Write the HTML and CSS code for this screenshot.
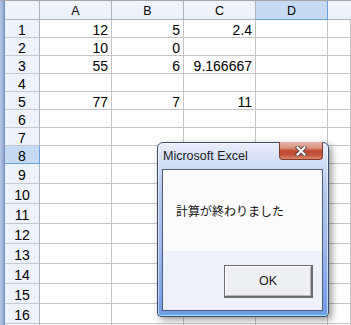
FILE: index.html
```html
<html>
<head>
	<title>Microsoft Excel</title>
	<link rel="stylesheet" href="styles.css">
</head>
<body>
<div class="window">
	<div class="frameLeft"></div>
	<div class="sheet">
		<div class="hd corner"></div><div class="hd">A</div><div class="hd">B</div><div class="hd">C</div><div class="hd sel">D</div><div class="hd last"></div>

		<div class="rh">1</div><div class="c">12</div><div class="c">5</div><div class="c">2.4</div><div class="c"></div><div class="c"></div>
		<div class="rh">2</div><div class="c">10</div><div class="c">0</div><div class="c"></div><div class="c"></div><div class="c"></div>
		<div class="rh">3</div><div class="c">55</div><div class="c">6</div><div class="c">9.166667</div><div class="c"></div><div class="c"></div>
		<div class="rh">4</div><div class="c"></div><div class="c"></div><div class="c"></div><div class="c"></div><div class="c"></div>
		<div class="rh">5</div><div class="c">77</div><div class="c">7</div><div class="c">11</div><div class="c"></div><div class="c"></div>
		<div class="rh">6</div><div class="c"></div><div class="c"></div><div class="c"></div><div class="c"></div><div class="c"></div>
		<div class="rh">7</div><div class="c"></div><div class="c"></div><div class="c"></div><div class="c"></div><div class="c"></div>
		<div class="rh sel">8</div><div class="c"></div><div class="c"></div><div class="c"></div><div class="c"></div><div class="c"></div>
		<div class="rh tall">9</div><div class="c"></div><div class="c"></div><div class="c"></div><div class="c"></div><div class="c"></div>
		<div class="rh tall">10</div><div class="c"></div><div class="c"></div><div class="c"></div><div class="c"></div><div class="c"></div>
		<div class="rh tall">11</div><div class="c"></div><div class="c"></div><div class="c"></div><div class="c"></div><div class="c"></div>
		<div class="rh tall">12</div><div class="c"></div><div class="c"></div><div class="c"></div><div class="c"></div><div class="c"></div>
		<div class="rh tall">13</div><div class="c"></div><div class="c"></div><div class="c"></div><div class="c"></div><div class="c"></div>
		<div class="rh tall">14</div><div class="c"></div><div class="c"></div><div class="c"></div><div class="c"></div><div class="c"></div>
		<div class="rh tall">15</div><div class="c"></div><div class="c"></div><div class="c"></div><div class="c"></div><div class="c"></div>
		<div class="rh tall">16</div><div class="c"></div><div class="c"></div><div class="c"></div><div class="c"></div><div class="c"></div>
		<div class="rh tall"></div><div class="c"></div><div class="c"></div><div class="c"></div><div class="c"></div><div class="c"></div>
	</div>
</div>

<div class="dialog">
	<div class="dlgTitle">
		<span class="dlgCaption">Microsoft Excel</span>
		<span class="closeBtn">
			<svg width="12" height="10" viewBox="0 0 12 10">
				<path d="M2.5 1.5 L9.5 8.5 M9.5 1.5 L2.5 8.5" stroke="#5a4a4a" stroke-width="4" stroke-linecap="square"/>
				<path d="M2.5 1.5 L9.5 8.5 M9.5 1.5 L2.5 8.5" stroke="#ffffff" stroke-width="2" stroke-linecap="square"/>
			</svg>
		</span>
	</div>
	<div class="dlgBody">
		<div class="dlgMsg">計算が終わりました</div>
		<div class="dlgActions">
			<div class="okBtn">OK</div>
		</div>
	</div>
</div>
</body>
</html>
```

FILE: styles.css
```css
body {
	margin: 0;
	width: 351px;
	height: 325px;
	overflow: hidden;
	background-color: #ffffff;
	font-family: "Liberation Sans", Arial, sans-serif;
}

.window {
	display: flex;
	border-top: 1px solid #a6a6a6;
	height: 324px;
	overflow: hidden;
}
.frameLeft {
	width: 4px;
	flex: none;
	background: linear-gradient(to right, #b9c8e6, #8da3d2);
	border-right: 1px solid #7d90b9;
}

.sheet {
	flex: 1;
	display: grid;
	grid-template-columns: 35px 72px 72px 72px 72px 1fr;
	grid-template-rows: 19px repeat(8, 18px) repeat(9, 20px);
	font-size: 14px;
	line-height: 14px;
	color: #000000;
}
.sheet > div {
	box-sizing: border-box;
	display: flex;
	align-items: flex-end;
	white-space: nowrap;
	overflow: hidden;
}

.c {
	justify-content: flex-end;
	padding-right: 3px;
	background-color: #ffffff;
	border-right: 1px solid #c4c4c4;
	border-bottom: 1px solid #c4c4c4;
}

.hd {
	justify-content: center;
	font-size: 12.5px;
	padding-bottom: 1px;
	background-color: #eef2fa;
	border-right: 1px solid #aab3c0;
	border-bottom: 1px solid #aab3c0;
}
.hd.last {
	border-right: none;
}
.rh {
	justify-content: center;
	background-color: #eef2fa;
	border-right: 1px solid #aab3c0;
	border-bottom: 1px solid #c4c8d0;
}
.rh.tall, .tall ~ .c {
	padding-bottom: 1px;
}
.hd.sel, .rh.sel {
	background-color: #c6daf4;
	border-right-color: #6a9fe0;
	border-bottom-color: #6a9fe0;
}

.dialog {
	position: absolute;
	left: 157px;
	top: 142px;
	width: 172px;
	height: 175px;
	box-sizing: border-box;
	display: flex;
	flex-direction: column;
	border: 1px solid #3c4c6c;
	border-radius: 6px 6px 4px 4px;
	background: linear-gradient(to bottom, #e9eefb 0%, #cfdcf5 12%, #b2c7ee 30%, #9db8ea 60%, #6f9be6 100%);
	box-shadow: 3px 3px 7px rgba(0, 0, 0, 0.4), inset 0 0 0 1px rgba(255, 255, 255, 0.55), inset 0 -2px 0 #58b4ec;
}

.dlgTitle {
	height: 26px;
	flex: none;
	display: flex;
	align-items: flex-start;
}
.dlgCaption {
	padding: 6px 0 0 5px;
	font-size: 12.5px;
	color: #1b1b22;
}
.closeBtn {
	margin-left: auto;
	margin-right: 5px;
	margin-top: -1px;
	width: 44px;
	height: 18px;
	box-sizing: border-box;
	display: flex;
	align-items: center;
	justify-content: center;
	border: 1px solid #83392b;
	border-top: none;
	border-radius: 0 0 4px 4px;
	background: linear-gradient(to bottom, #e9b6aa 0%, #d9917f 35%, #c24a31 52%, #c2513a 75%, #da8b6c 100%);
}

.dlgBody {
	flex: 1;
	display: flex;
	flex-direction: column;
	margin: 0 5px 5px 4px;
	border: 1px solid #4f5d79;
}
.dlgMsg {
	height: 81px;
	box-sizing: border-box;
	padding: 33px 0 0 13px;
	background-color: #fbfbfb;
	font-family: "Noto Sans CJK JP", sans-serif;
	font-size: 12px;
	line-height: 16px;
	color: #111111;
}
.dlgActions {
	flex: 1;
	display: flex;
	justify-content: flex-end;
	align-items: flex-start;
	padding: 14px 9px 0 0;
	background-color: #eef1f9;
}
.okBtn {
	width: 89px;
	height: 33px;
	box-sizing: border-box;
	display: flex;
	align-items: center;
	justify-content: center;
	border: 1px solid #6c6c6c;
	border-right-width: 2px;
	border-bottom-width: 2px;
	box-shadow: inset 1px 1px 0 #ffffff, inset -1px -1px 0 #b5b5b8;
	background-color: #eeeff3;
	font-size: 12.5px;
	color: #1a1a1a;
}
```
